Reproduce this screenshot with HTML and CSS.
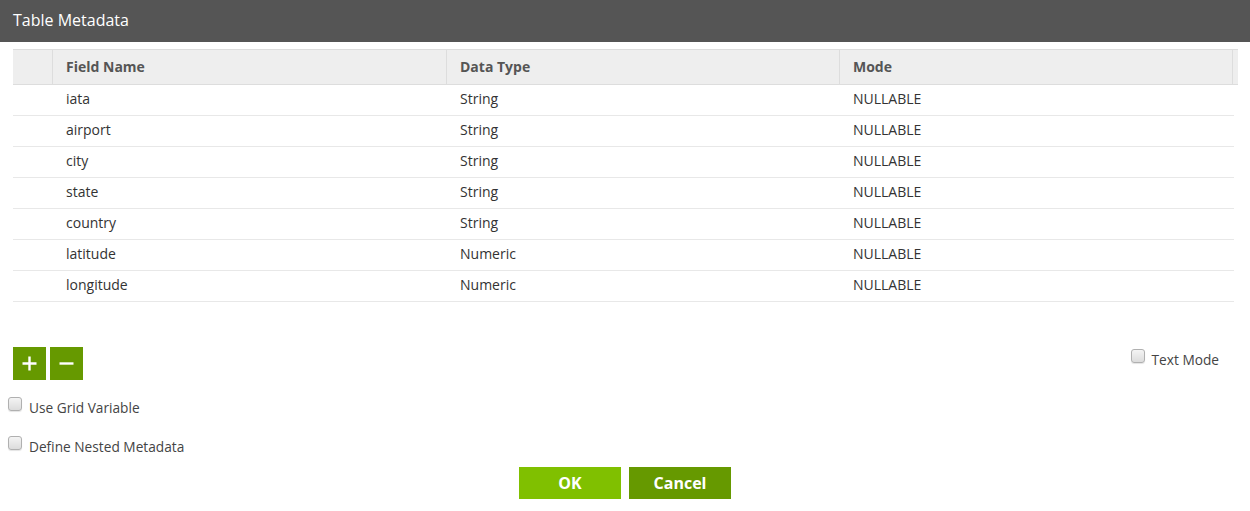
FILE: index.html
```html
<!DOCTYPE html>
<html>
<head lang="en">
  <meta charset="UTF-8">
  <title>Table Metadata</title>
  <link rel="stylesheet" href="styles.css">
</head>
<body>
<div class="dialog-title">Table Metadata</div>
<div class="grid">
  <div class="grid-head">
    <div class="cell cell-num"></div>
    <div class="cell">Field Name</div>
    <div class="cell">Data Type</div>
    <div class="cell">Mode</div>
    <div class="cell cell-gutter"></div>
  </div>
  <div class="grid-row"><div class="cell cell-num"></div><div class="cell">iata</div><div class="cell">String</div><div class="cell">NULLABLE</div></div>
  <div class="grid-row"><div class="cell cell-num"></div><div class="cell">airport</div><div class="cell">String</div><div class="cell">NULLABLE</div></div>
  <div class="grid-row"><div class="cell cell-num"></div><div class="cell">city</div><div class="cell">String</div><div class="cell">NULLABLE</div></div>
  <div class="grid-row"><div class="cell cell-num"></div><div class="cell">state</div><div class="cell">String</div><div class="cell">NULLABLE</div></div>
  <div class="grid-row"><div class="cell cell-num"></div><div class="cell">country</div><div class="cell">String</div><div class="cell">NULLABLE</div></div>
  <div class="grid-row"><div class="cell cell-num"></div><div class="cell">latitude</div><div class="cell">Numeric</div><div class="cell">NULLABLE</div></div>
  <div class="grid-row"><div class="cell cell-num"></div><div class="cell">longitude</div><div class="cell">Numeric</div><div class="cell">NULLABLE</div></div>
</div>
<div class="toolbar">
  <div class="tool-buttons">
    <a href="javascript:void(0);" class="tool-btn">
      <svg width="17" height="17" viewBox="0 0 17 17"><path d="M8.5 1.5v14M1.5 8.5h14" stroke="#fff" stroke-width="2.4"/></svg>
    </a>
    <a href="javascript:void(0);" class="tool-btn">
      <svg width="17" height="17" viewBox="0 0 17 17"><path d="M1.5 8.5h14" stroke="#fff" stroke-width="2.4"/></svg>
    </a>
  </div>
  <label class="option option-right"><input type="checkbox" class="check">Text Mode</label>
</div>
<label class="option option-first"><input type="checkbox" class="check">Use Grid Variable</label>
<label class="option option-second"><input type="checkbox" class="check">Define Nested Metadata</label>
<div class="dialog-buttons">
  <a href="javascript:void(0);" class="btn btn-ok">OK</a>
  <a href="javascript:void(0);" class="btn btn-cancel">Cancel</a>
</div>
</body>
</html>
```

FILE: styles.css
```css
body {
  margin: 0px;
  font-family: "Open Sans", "Liberation Sans", sans-serif;
  font-size: 14px;
  color: #333333;
  background: #ffffff;
}

a {
  text-decoration: none;
}

.dialog-title {
  height: 42px;
  line-height: 40px;
  padding-left: 13px;
  background: #555555;
  color: #ffffff;
  font-size: 16px;
}

.grid {
  margin: 7px 12px 0px 13px;
}

.grid-head,
.grid-row {
  display: grid;
  grid-template-columns: 40px 394px 393px 393px 5px;
}

.grid-head {
  height: 34px;
  line-height: 34px;
  background: #eeeeee;
  border-top: 1px solid #dddddd;
  border-bottom: 1px solid #dddddd;
  font-weight: bold;
  color: #555555;
}

.grid-head .cell {
  border-right: 1px solid #dddddd;
}

.grid-head .cell-gutter {
  border-right: none;
}

.grid-row {
  height: 30px;
  line-height: 28px;
  padding-bottom: 2px;
  box-sizing: border-box;
  height: 31px;
  border-bottom: 1px solid #e8e8e8;
  margin-right: 4px;
}

.cell {
  padding-left: 13px;
  white-space: nowrap;
}

.cell-num,
.cell-gutter {
  padding-left: 0px;
}

.grid-row .cell:nth-child(2),
.grid-row .cell:nth-child(3),
.grid-row .cell:nth-child(4) {
  padding-left: 13px;
}

.toolbar {
  display: flex;
  justify-content: space-between;
  align-items: flex-start;
  margin: 45px 31px 0px 13px;
}

.tool-buttons {
  display: flex;
  gap: 4px;
}

.tool-btn {
  display: flex;
  align-items: center;
  justify-content: center;
  width: 33px;
  height: 33px;
  background: #669900;
}

.option {
  display: flex;
  align-items: center;
  height: 20px;
  color: #444444;
  font-size: 13.7px;
}

.option-right {
  margin-top: 2px;
}

.option-first {
  margin: 17px 0px 0px 8px;
}

.option-second {
  margin: 19px 0px 0px 8px;
}

.check {
  -webkit-appearance: none;
  appearance: none;
  width: 14px;
  height: 14px;
  margin: -6px 7px 0px 0px;
  border: 1px solid #b0b0b0;
  border-radius: 3px;
  background: linear-gradient(#f4f4f4, #dcdcdc);
  box-shadow: 0px 1px 1px #e4e4e4;
}

.option-right .check {
  margin-right: 7px;
}

.dialog-buttons {
  display: flex;
  justify-content: center;
  gap: 8px;
  margin-top: 11px;
}

.btn {
  display: block;
  width: 102px;
  height: 32px;
  line-height: 32px;
  text-align: center;
  color: #ffffff;
  font-weight: bold;
  font-size: 16px;
}

.btn-ok {
  background: #80c000;
}

.btn-cancel {
  background: #669900;
}
```
